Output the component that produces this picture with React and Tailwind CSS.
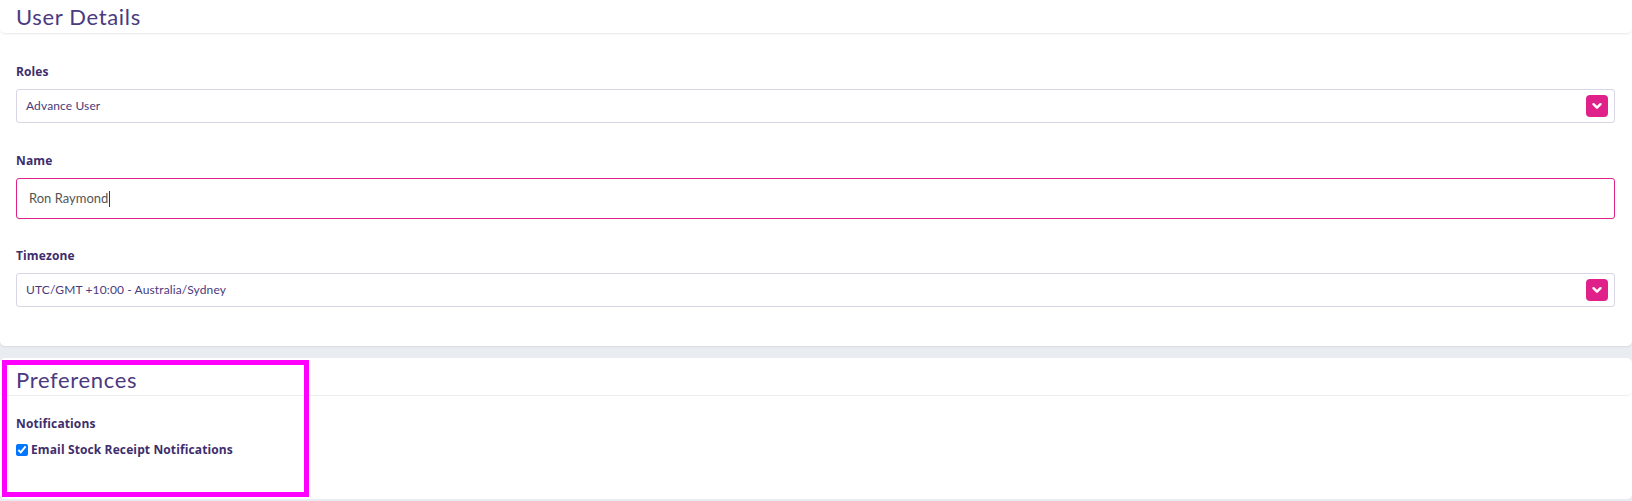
import React from "react";

const ChevronButton = () => (
  <span className="flex h-[22px] w-[22px] items-center justify-center rounded-[4px] bg-[#e0218a]">
    <svg width="12" height="12" viewBox="0 0 12 12" fill="none">
      <path d="M2.5 4.2 6 7.7l3.5-3.5" stroke="white" strokeWidth="2.4" strokeLinecap="round" strokeLinejoin="round" />
    </svg>
  </span>
);

const Label = ({ children }) => (
  <div className="h-4 font-['Open_Sans',sans-serif] text-[12px] font-bold leading-4 tracking-[0.01em] text-[#3e2d6c]">
    {children}
  </div>
);

const SelectBox = ({ value }) => (
  <div className="mt-[9px] flex h-[34px] items-center justify-between rounded-[3px] border border-[#d9d5e4] bg-white pl-[9px] pr-[6px]">
    <span className="text-[12px] tracking-[0.01em] text-[#4a3a7c]">{value}</span>
    <ChevronButton />
  </div>
);

const App = () => {
  return (
    <div
      className="relative h-[501px] overflow-hidden bg-[#e9edf2]"
      style={{ fontFamily: "Lato, 'Open Sans', sans-serif" }}
    >
      {/* User Details */}
      <div className="h-[346px] rounded-b-[5px] bg-white shadow-[0_1px_2px_rgba(0,0,0,0.08)]">
        <div className="flex h-[34px] items-start rounded-b-[5px] border-b border-[#eceef1] px-4 shadow-[0_1px_1px_rgba(0,0,0,0.03)]">
          <h1 className="pt-[4px] text-[22px] font-normal leading-[26px] tracking-[0.03em] text-[#4b3a80]">User Details</h1>
        </div>

        <div className="px-4 pr-[17px]">
          <div className="pt-[30px]">
            <Label>Roles</Label>
            <SelectBox value="Advance User" />
          </div>

          <div className="pt-[30px]">
            <Label>Name</Label>
            <div className="mt-[9px] flex h-[41px] items-center rounded-[3px] border border-[#e0218a] bg-white px-3">
              <span className="text-[13px] text-[#555555]">Ron Raymond</span>
              <span className="ml-[1px] h-[16px] w-px bg-[#333]" />
            </div>
          </div>

          <div className="pt-[29px]">
            <Label>Timezone</Label>
            <SelectBox value="UTC/GMT +10:00 - Australia/Sydney" />
          </div>
        </div>
      </div>

      {/* Preferences */}
      <div className="mt-[12px] h-[141px] rounded-[5px] bg-white">
        <div className="flex h-[38px] items-start rounded-b-[5px] border-b border-[#eceef1] px-4">
          <h2 className="pt-[9px] text-[22px] font-normal leading-[26px] tracking-[0.03em] text-[#4b3a80]">Preferences</h2>
        </div>
        <div className="px-4 pt-[20px]">
          <Label>Notifications</Label>
          <label className="mt-[9px] flex items-center gap-[3px]">
            <input type="checkbox" defaultChecked className="m-0 h-[12px] w-[12px] accent-[#0075ff]" />
            <span className="font-['Open_Sans',sans-serif] text-[12px] font-bold tracking-[0.01em] text-[#3e2d6c]">
              Email Stock Receipt Notifications
            </span>
          </label>
        </div>
      </div>

      {/* highlight annotation */}
      <div className="pointer-events-none absolute left-[2px] top-[360px] h-[137px] w-[307px] border-[5px] border-[#ff00ff]" />
    </div>
  );
};

export default App;
